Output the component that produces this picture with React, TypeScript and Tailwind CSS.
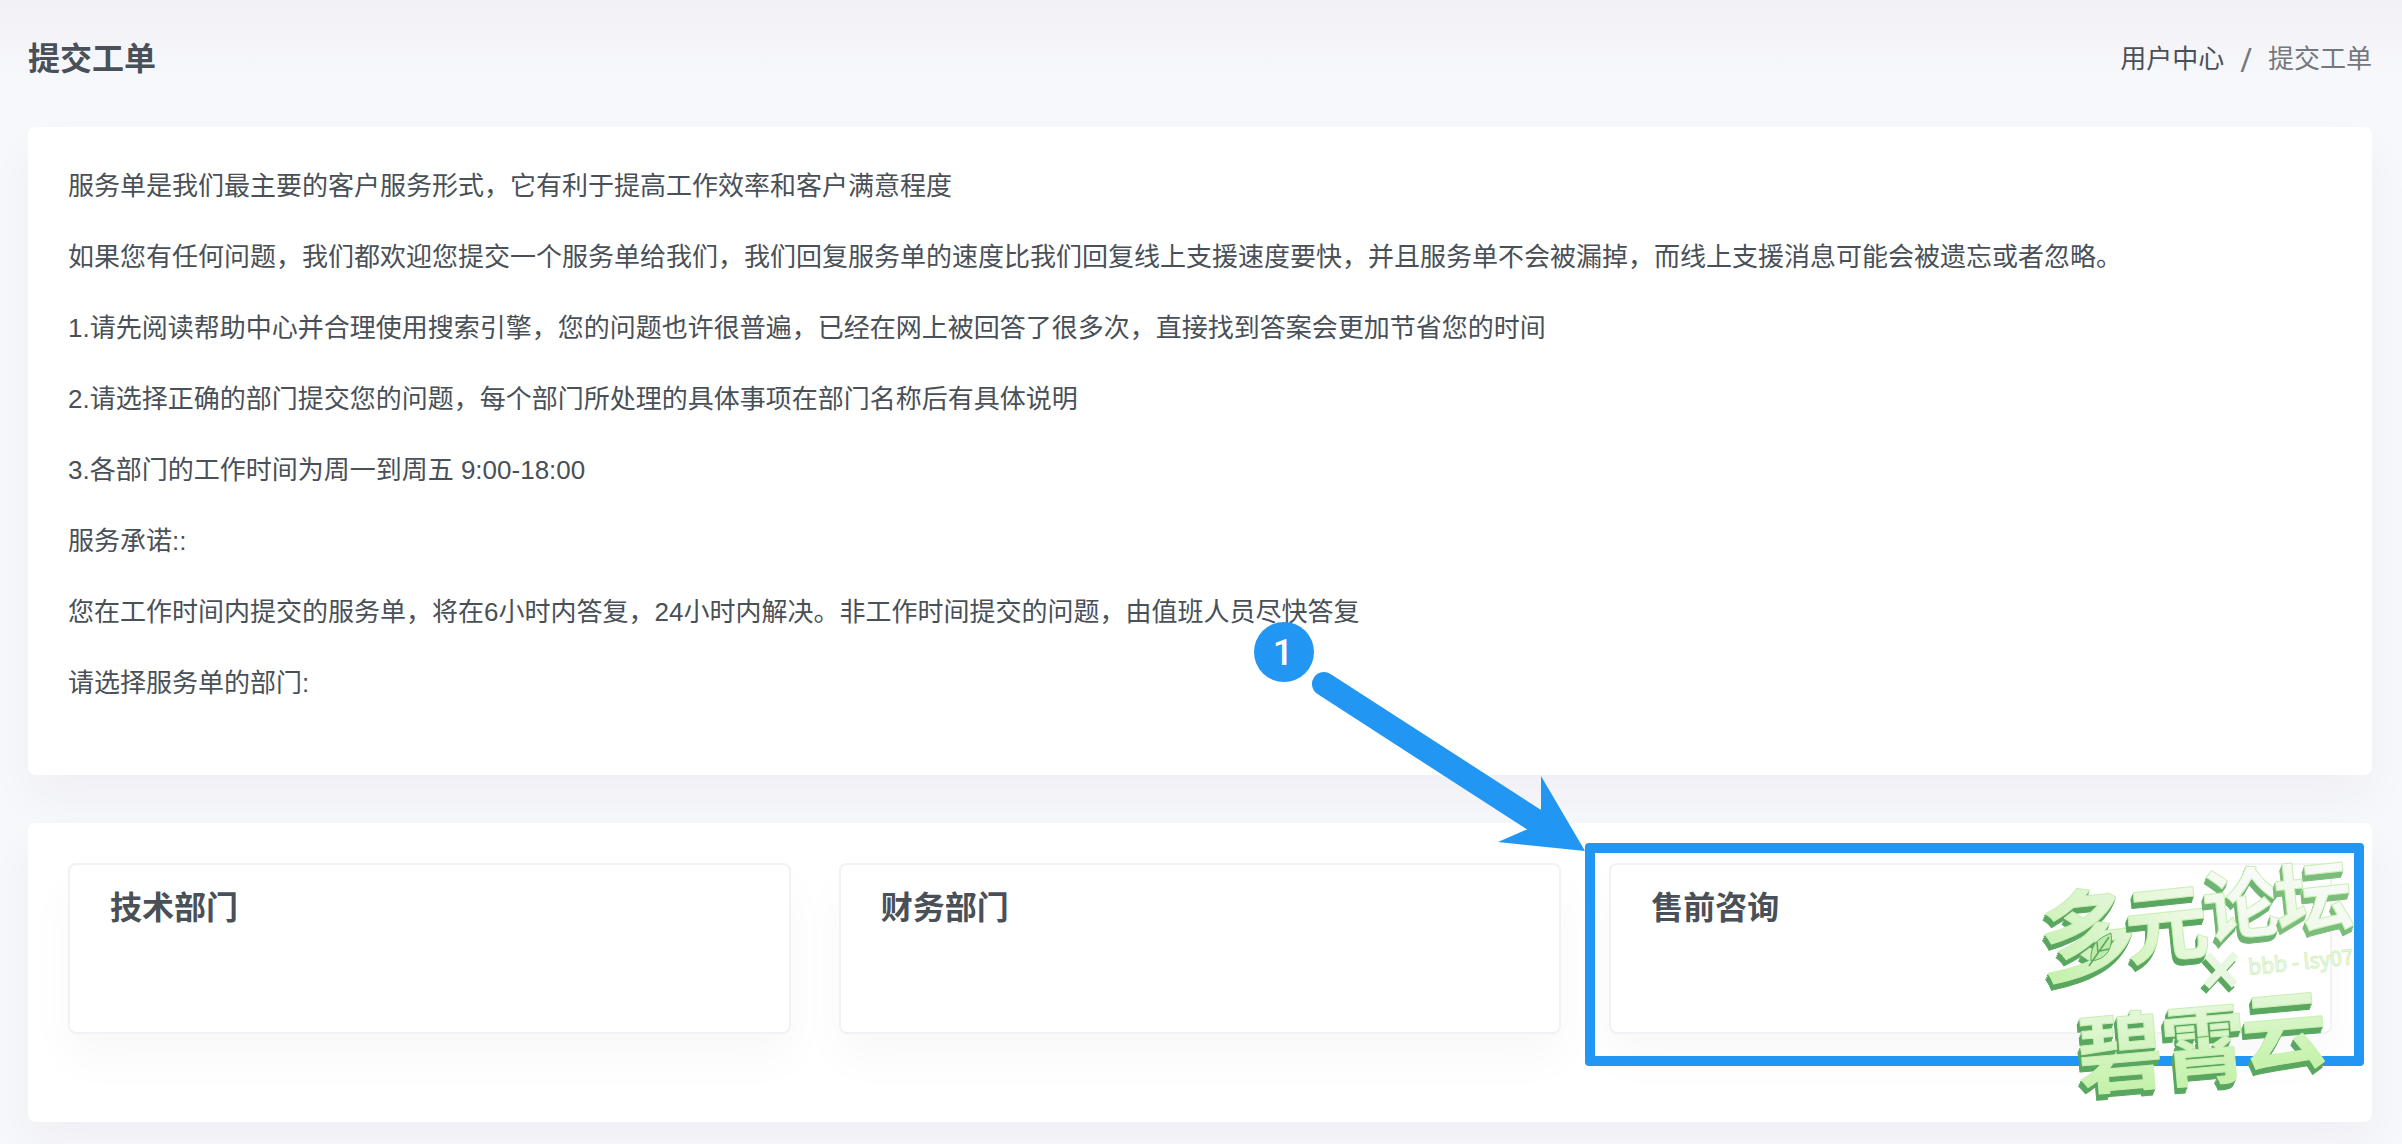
const notices = [
  '服务单是我们最主要的客户服务形式，它有利于提高工作效率和客户满意程度',
  '如果您有任何问题，我们都欢迎您提交一个服务单给我们，我们回复服务单的速度比我们回复线上支援速度要快，并且服务单不会被漏掉，而线上支援消息可能会被遗忘或者忽略。',
  '1.请先阅读帮助中心并合理使用搜索引擎，您的问题也许很普遍，已经在网上被回答了很多次，直接找到答案会更加节省您的时间',
  '2.请选择正确的部门提交您的问题，每个部门所处理的具体事项在部门名称后有具体说明',
  '3.各部门的工作时间为周一到周五 9:00-18:00',
  '服务承诺::',
  '您在工作时间内提交的服务单，将在6小时内答复，24小时内解决。非工作时间提交的问题，由值班人员尽快答复',
  '请选择服务单的部门:',
]

const departments = [
  { id: 1, name: '技术部门' },
  { id: 2, name: '财务部门' },
  { id: 3, name: '售前咨询', highlighted: true },
]

interface Glyph {
  char: string
  x: number
  y: number
  size: number
  rotate: number
  fill: string
  side: string
}

const glyphs: Glyph[] = [
  { char: '多', x: 13, y: 125, size: 98, rotate: -6, fill: 'url(#wm-top)', side: '#5aa760' },
  { char: '元', x: 98, y: 108, size: 84, rotate: -6, fill: 'url(#wm-mid)', side: '#5aa760' },
  { char: '论', x: 176, y: 86, size: 78, rotate: -6, fill: 'url(#wm-pale)', side: '#6fb473' },
  { char: '坛', x: 248, y: 79, size: 78, rotate: -6, fill: 'url(#wm-pale)', side: '#7cbd7c' },
  { char: '碧', x: 50, y: 237, size: 86, rotate: -5, fill: 'url(#wm-bottom)', side: '#5aa760' },
  { char: '霄', x: 134, y: 230, size: 86, rotate: -5, fill: 'url(#wm-bottom)', side: '#5aa760' },
  { char: '云', x: 214, y: 215, size: 86, rotate: -5, fill: 'url(#wm-bottom)', side: '#5aa760' },
]

const depth = [6, 4, 2]

function Watermark() {
  return (
    <svg
      aria-hidden="true"
      width="420"
      height="350"
      viewBox="-30 -40 420 350"
      className="pointer-events-none absolute -top-13 -right-22 font-['Noto_Sans_CJK_SC',sans-serif] font-bold"
    >
      <defs>
        <linearGradient id="wm-top" x1="0" y1="1" x2="1" y2="0">
          <stop offset="0" stopColor="#bdf0a0" />
          <stop offset="0.5" stopColor="#d8f4c8" />
          <stop offset="1" stopColor="#ecf8e4" />
        </linearGradient>
        <linearGradient id="wm-mid" x1="0" y1="1" x2="1" y2="0">
          <stop offset="0" stopColor="#cdf3b6" />
          <stop offset="0.5" stopColor="#e7f8db" />
          <stop offset="1" stopColor="#f3faef" />
        </linearGradient>
        <linearGradient id="wm-pale" x1="0" y1="1" x2="1" y2="0">
          <stop offset="0" stopColor="#e6f8da" />
          <stop offset="0.5" stopColor="#f5faf3" />
          <stop offset="1" stopColor="#fafafc" />
        </linearGradient>
        <linearGradient id="wm-bottom" x1="0" y1="1" x2="0" y2="0">
          <stop offset="0.1" stopColor="#c2f2a6" />
          <stop offset="0.6" stopColor="#daf5ca" />
          <stop offset="1" stopColor="#f2faee" />
        </linearGradient>
      </defs>

      {glyphs.map((g) => (
        <g key={g.char} transform={`rotate(${g.rotate} ${g.x} ${g.y})`} fontSize={g.size} strokeLinejoin="round">
          {depth.map((d) => (
            <text key={d} x={g.x - d * 0.5} y={g.y + d} fill={g.side} stroke={g.side} strokeWidth="1">
              {g.char}
            </text>
          ))}
          <text x={g.x} y={g.y} fill={g.fill} stroke="#c9efb4" strokeWidth="1">
            {g.char}
          </text>
        </g>
      ))}

      {/* Leaf */}
      <g transform="translate(11 -2)">
        <path d="M50 112 C49 96 56 90 70 84 C72 98 67 110 50 112Z" fill="#bdebaa" stroke="#5aa760" />
        <path d="M48 117 L68 88 M57 104 L56 93 M59 102 L68 100" fill="none" stroke="#5aa760" strokeWidth="1.5" />
      </g>

      {/* Cross */}
      <g fill="none" strokeWidth="8" strokeLinecap="square">
        <path d="M180 107 L202 131 M203 106 L179 132" transform="translate(-3 5)" stroke="#5aa760" />
        <path d="M180 107 L202 131 M203 106 L179 132" stroke="#e8f8e0" />
      </g>

      <text
        x="219"
        y="124"
        fontSize="21"
        transform="rotate(-6 219 124)"
        fill="#f6fbf3"
        stroke="#d3f1c2"
        strokeWidth="1"
        className="font-normal"
      >
        bbb - lsy07
      </text>
    </svg>
  )
}

function Callout() {
  return (
    <div className="pointer-events-none absolute -top-5 -right-8 -bottom-8 -left-6 rounded-sm border-10 border-[#2196f3]">
      <svg width="350" height="260" viewBox="0 0 350 260" className="absolute right-full bottom-full">
        <circle cx="39" cy="59" r="30" fill="#2196f3" />
        <text
          x="38"
          y="72"
          textAnchor="middle"
          fontSize="36"
          fill="#ffffff"
          className="font-['Roboto',sans-serif] font-medium"
        >
          1
        </text>
        <path d="M79 91 L305 237" stroke="#2196f3" strokeWidth="24" strokeLinecap="round" />
        <path d="M296 183 L340 258 L253 249 L283 236 L296 216Z" fill="#2196f3" />
      </svg>
    </div>
  )
}

export default function App() {
  return (
    <div className="min-h-screen overflow-hidden bg-[#f7f8fb] pr-[30px] pb-5 pl-7 font-['Liberation_Sans','Noto_Sans_CJK_SC',sans-serif] text-[26px] leading-[39px] text-[#495057]">
      {/* Page title */}
      <header className="-mr-[30px] -ml-7 flex items-center justify-between bg-linear-to-b from-[#f2f1f6] to-[#f7f8fb] to-60% pt-10 pr-[30px] pb-12 pl-7">
        <h1 className="text-[32px] font-bold">提交工单</h1>
        <nav aria-label="breadcrumb">
          <ol className="flex">
            <li>
              <a href="#">用户中心</a>
            </li>
            <li className="flex text-[#74787d]">
              <span className="px-4 font-['Open_Sans',sans-serif] text-[32px]">/</span>
              提交工单
            </li>
          </ol>
        </nav>
      </header>

      {/* Notice */}
      <section className="mb-12 rounded-lg bg-white p-10 shadow-[0_24px_48px_rgba(60,30,90,0.04)]">
        {notices.map((text) => (
          <p key={text} className="mb-8">
            {text}
          </p>
        ))}
      </section>

      {/* Departments */}
      <section className="relative rounded-lg bg-white p-10 pb-22 shadow-[0_24px_48px_rgba(60,30,90,0.04)]">
        <div className="grid grid-cols-3 gap-12">
          {departments.map((d) => (
            <div key={d.id} className="relative">
              <a
                href="#"
                className="block min-h-[171px] rounded-lg border-2 border-[#f1f1f6] bg-white px-10 pt-6 shadow-[0_24px_48px_rgba(18,38,63,0.03)]"
              >
                <h2 className="text-[32px] font-bold">{d.name}</h2>
              </a>
              {d.highlighted && (
                <>
                  <Callout />
                  <Watermark />
                </>
              )}
            </div>
          ))}
        </div>
      </section>
    </div>
  )
}
